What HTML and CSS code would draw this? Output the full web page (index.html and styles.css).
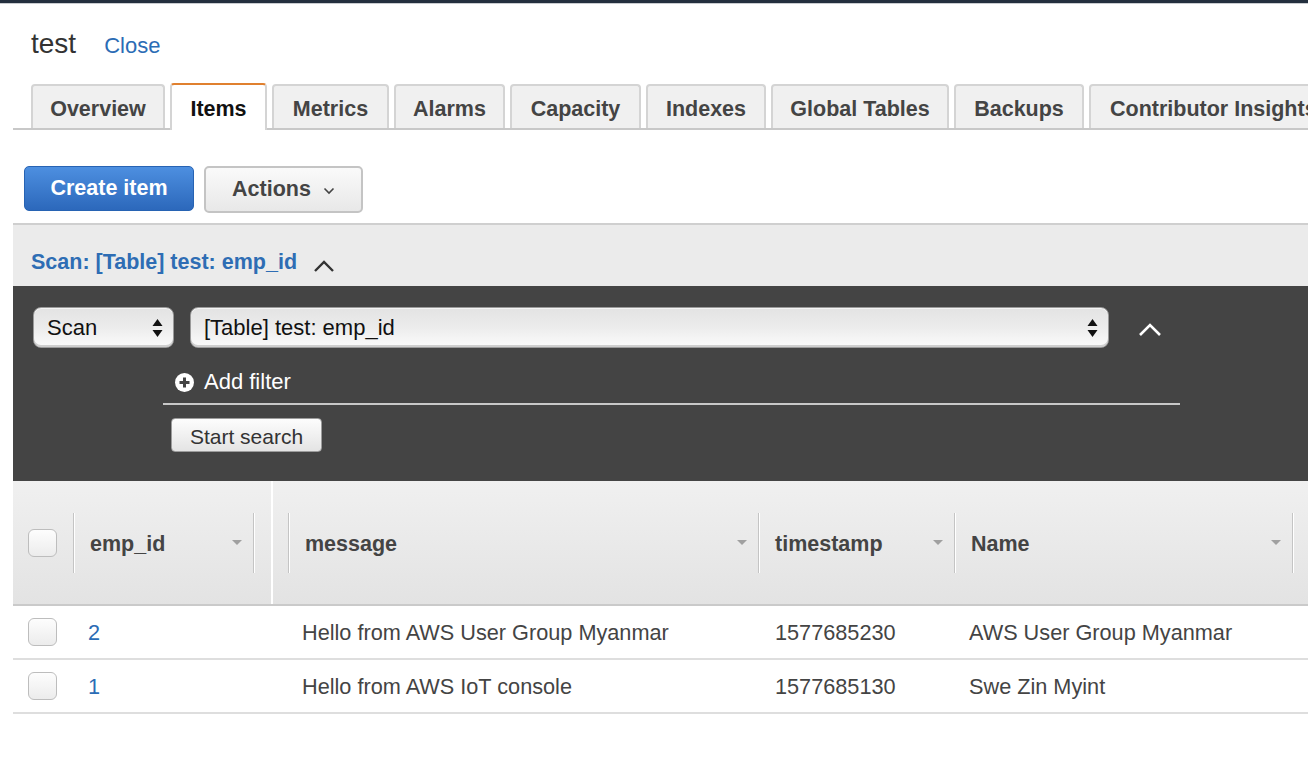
FILE: index.html
```html
<!DOCTYPE html>
<html>
<head>
<meta charset="utf-8">
<link rel="stylesheet" href="styles.css">
</head>
<body>
<div class="topbar"></div>
<div class="page">
  <div class="title-row">
    <span class="title">test</span>
    <a class="close">Close</a>
  </div>

  <div class="tabs">
    <div class="tab">Overview</div>
    <div class="tab active">Items</div>
    <div class="tab">Metrics</div>
    <div class="tab">Alarms</div>
    <div class="tab">Capacity</div>
    <div class="tab">Indexes</div>
    <div class="tab">Global Tables</div>
    <div class="tab">Backups</div>
    <div class="tab">Contributor Insights</div>
  </div>

  <div class="actions-row">
    <button class="btn-primary">Create item</button>
    <button class="btn-secondary">Actions
      <svg class="caret-down" width="12" height="8" viewBox="0 0 12 8"><polyline points="1.5,1.5 6,6 10.5,1.5" fill="none" stroke="#444" stroke-width="1.6"/></svg>
    </button>
  </div>

  <div class="scan-bar">
    <span class="scan-title">Scan: [Table] test: emp_id</span>
    <svg class="caret-up" width="22" height="14" viewBox="0 0 22 14"><polyline points="2,12 11,3 20,12" fill="none" stroke="#333" stroke-width="2.4"/></svg>
  </div>

  <div class="panel">
    <div class="select-row">
      <div class="select select-small">
        <span>Scan</span>
        <svg class="updown" width="11" height="20" viewBox="0 0 11 20"><polygon points="5.5,1 10.5,8 0.5,8" fill="#111"/><polygon points="0.5,12 10.5,12 5.5,19" fill="#111"/></svg>
      </div>
      <div class="select select-large">
        <span>[Table] test: emp_id</span>
        <svg class="updown" width="11" height="20" viewBox="0 0 11 20"><polygon points="5.5,1 10.5,8 0.5,8" fill="#111"/><polygon points="0.5,12 10.5,12 5.5,19" fill="#111"/></svg>
      </div>
      <svg class="panel-caret" width="24" height="16" viewBox="0 0 24 16"><polyline points="2,14 12,4 22,14" fill="none" stroke="#fff" stroke-width="2.6"/></svg>
    </div>
    <div class="filters">
      <div class="add-filter">
        <svg width="19" height="19" viewBox="0 0 19 19"><circle cx="9.5" cy="9.5" r="9.5" fill="#fff"/><rect x="4.5" y="8" width="10" height="3" fill="#444"/><rect x="8" y="4.5" width="3" height="10" fill="#444"/></svg>
        <span>Add filter</span>
      </div>
      <div class="divider"></div>
      <button class="btn-search">Start search</button>
    </div>
  </div>

  <div class="grid-head">
    <div class="hcell hc-check"><span class="checkbox"></span></div>
    <div class="hcell hc-id"><span class="sep"></span><span class="hlabel">emp_id</span><span class="tri"></span><span class="sep"></span></div>
    <div class="hcell hc-msg"><span class="sep"></span><span class="hlabel">message</span><span class="tri"></span></div>
    <div class="hcell"><span class="sep"></span><span class="hlabel">timestamp</span><span class="tri"></span></div>
    <div class="hcell"><span class="sep"></span><span class="hlabel">Name</span><span class="tri"></span></div>
    <div class="hcell"><span class="sep"></span></div>
  </div>

  <div class="grid-row">
    <div class="cell c-check"><span class="checkbox"></span></div>
    <div class="cell c-id"><a class="link">2</a></div>
    <div class="cell c-msg">Hello from AWS User Group Myanmar</div>
    <div class="cell c-ts">1577685230</div>
    <div class="cell c-name">AWS User Group Myanmar</div>
    <div class="cell"></div>
  </div>
  <div class="grid-row">
    <div class="cell c-check"><span class="checkbox"></span></div>
    <div class="cell c-id"><a class="link">1</a></div>
    <div class="cell c-msg">Hello from AWS IoT console</div>
    <div class="cell c-ts">1577685130</div>
    <div class="cell c-name">Swe Zin Myint</div>
    <div class="cell"></div>
  </div>
</div>
</body>
</html>
```

FILE: styles.css
```css
html, body {
  margin: 0;
  padding: 0;
  background: #fff;
  overflow: hidden;
  width: 1308px;
  height: 764px;
}
body {
  font-family: "Liberation Sans", Arial, Helvetica, sans-serif;
  color: #444;
}
.topbar {
  height: 3px;
  background: #232f3e;
  border-bottom: 1px solid #c9ccd0;
}
.page {
  padding-left: 13px;
  width: 1340px;
}

/* title */
.title-row {
  display: flex;
  align-items: baseline;
  padding: 24px 0 0 18px;
  height: 32px;
}
.title {
  font-size: 28px;
  line-height: 32px;
  color: #333;
}
.close {
  margin-left: 28px;
  font-size: 22px;
  color: #2b6cb5;
}

/* tabs */
.tabs {
  display: flex;
  gap: 5px;
  margin-top: 24px;
  padding-left: 18px;
  border-bottom: 2px solid #c8c8c8;
  height: 44px;
}
.tab {
  box-sizing: border-box;
  height: 44px;
  margin-bottom: -2px;
  padding: 4px 0 0;
  display: flex;
  align-items: center;
  justify-content: center;
  flex: none;
  font-size: 21.5px;
  font-weight: bold;
  color: #444;
  background: #f0f0f0;
  border: 2px solid #d4d4d4;
  border-bottom: none;
  border-radius: 4px 4px 0 0;
  white-space: nowrap;
}
.tab:nth-child(1) { width: 134px; }
.tab:nth-child(2) { width: 97px; }
.tab:nth-child(3) { width: 117px; }
.tab:nth-child(4) { width: 111px; }
.tab:nth-child(5) { width: 131px; }
.tab:nth-child(6) { width: 120px; }
.tab:nth-child(7) { width: 178px; }
.tab:nth-child(8) { width: 130px; }
.tab:nth-child(9) { width: 240px; justify-content: flex-start; padding-left: 19px; }
.tab.active {
  background: #fff;
  color: #111;
  border-top: 2px solid #e0802f;
  margin-top: -1px;
  height: 47px;
  padding-top: 3px;
}

/* buttons */
.actions-row {
  display: flex;
  gap: 10px;
  margin-top: 36px;
  padding-left: 11px;
  align-items: flex-start;
}
button {
  font-family: inherit;
  cursor: pointer;
}
.btn-primary {
  width: 170px;
  height: 45px;
  border: 1px solid #2763b3;
  border-radius: 5px;
  background: linear-gradient(#4d8fe0, #2c68bb);
  color: #fff;
  font-size: 21.5px;
  font-weight: bold;
  padding: 0;
}
.btn-secondary {
  width: 159px;
  height: 47px;
  border: 2px solid #c4c4c4;
  border-radius: 5px;
  background: linear-gradient(#fafafa, #e8e8e8);
  color: #444;
  font-size: 21.5px;
  font-weight: bold;
  padding: 0;
  display: flex;
  align-items: center;
  justify-content: center;
  gap: 12px;
}
.caret-down {
  margin-top: 3px;
}

/* scan bar */
.scan-bar {
  margin-top: 10px;
  height: 61px;
  border-top: 2px solid #cfcfcf;
  background: #ebebeb;
  display: flex;
  align-items: center;
  padding-left: 18px;
}
.scan-title {
  font-size: 21.5px;
  font-weight: bold;
  color: #2e6db4;
  padding-top: 14px;
}
.caret-up {
  margin-left: 16px;
  margin-top: 20px;
}

/* dark panel */
.panel {
  background: #444;
  padding: 21px 0 29px 20px;
}
.select-row {
  display: flex;
  align-items: center;
  gap: 16px;
}
.select {
  height: 39px;
  border: 1px solid #9a9a9a;
  border-radius: 8px;
  background: linear-gradient(#e3e3e3, #ececec 50%, #fbfbfb);
  box-shadow: inset 0 -2px 0 #cfcfcf, inset 0 1px 0 #f4f4f4;
  display: flex;
  align-items: center;
  justify-content: space-between;
  padding: 0 10px 0 13px;
  font-size: 22px;
  color: #111;
}
.select span {
  padding-top: 1px;
}
.select-small {
  width: 116px;
}
.select-large {
  width: 894px;
}
.panel-caret {
  margin-left: 13px;
  margin-top: 2px;
}
.filters {
  margin-left: 130px;
  width: 1017px;
}
.add-filter {
  display: flex;
  align-items: center;
  gap: 10px;
  padding: 22px 0 9px 12px;
  height: 24px;
  color: #fff;
  font-size: 22px;
}
.divider {
  height: 2px;
  background: #c8c8c8;
}
.btn-search {
  margin: 13px 0 0 8px;
  height: 34px;
  width: 151px;
  padding: 3px 0 0;
  border: 1px solid #9c9c9c;
  border-radius: 4px;
  background: linear-gradient(#fdfdfd, #e4e4e4);
  font-size: 21px;
  color: #333;
  display: block;
}

/* grid */
.grid-head, .grid-row {
  display: grid;
  grid-template-columns: 60px 198px 487px 196px 338px 1fr;
}
.grid-head {
  height: 123px;
  background: linear-gradient(#f0f0f0, #e3e3e3);
  border-bottom: 2px solid #cacaca;
}
.hcell {
  display: flex;
  align-items: center;
}
.hc-check {
  padding-left: 15px;
}
.hc-id {
  padding-right: 16px;
}
.hc-msg {
  border-left: 2px solid #fff;
  padding-left: 15px;
}
.sep {
  width: 1px;
  height: 60px;
  background: #c4c4c4;
  box-shadow: 1px 0 0 #fff;
  margin-right: 1px;
  flex: none;
}
.hlabel {
  margin-left: 15px;
  font-size: 21.5px;
  font-weight: bold;
  color: #444;
  white-space: nowrap;
  padding-top: 3px;
}
.tri {
  margin-left: auto;
  margin-right: 11px;
  width: 0;
  height: 0;
  border-left: 5px solid transparent;
  border-right: 5px solid transparent;
  border-top: 5px solid #a0a0a0;
  flex: none;
}
.checkbox {
  display: block;
  width: 27px;
  height: 26px;
  border: 1px solid #bdbdbd;
  border-radius: 6px;
  background: linear-gradient(#fdfdfd, #ececec);
}
.grid-row {
  height: 52px;
  border-bottom: 2px solid #dedede;
}
.cell {
  display: flex;
  align-items: center;
  font-size: 21.7px;
  color: #444;
  white-space: nowrap;
}
.c-check {
  padding-left: 15px;
}
.c-id {
  padding-left: 15px;
  padding-top: 2px;
}
.c-msg {
  padding-left: 31px;
  padding-top: 2px;
}
.c-ts {
  padding-left: 17px;
  padding-top: 2px;
}
.c-name {
  padding-left: 15px;
  padding-top: 2px;
}
.link {
  color: #2b6cb5;
}
```
